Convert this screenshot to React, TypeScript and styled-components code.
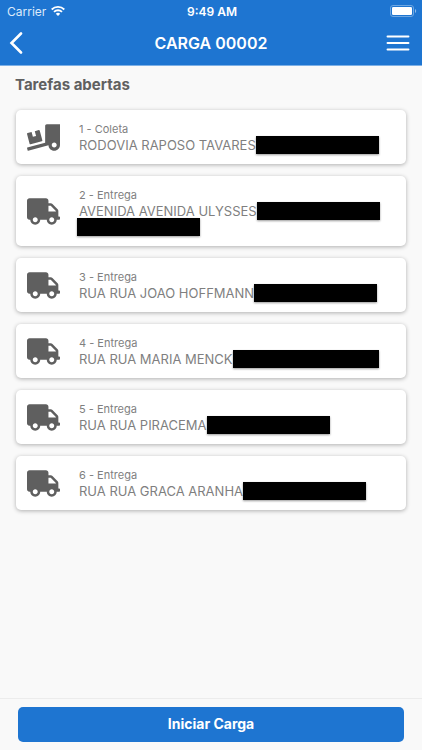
import React from "react";
import styled, { createGlobalStyle } from "styled-components";
import { FaTruck, FaTruckLoading } from "react-icons/fa";

const GlobalStyle = createGlobalStyle`
  *, *::before, *::after { box-sizing: border-box; }
  body {
    margin: 0;
    background: #f9f9f9;
    color: #7f7f7f;
    font-family: Inter, "Liberation Sans", sans-serif;
  }
  button { font: inherit; }
`;

const Screen = styled.div`
  display: flex;
  flex-direction: column;
  min-height: 100vh;
`;

const Top = styled.header`
  background: #1e75d1;
  border-bottom: 1px solid #7db0e6;
  color: #fff;
`;

const StatusBar = styled.div`
  display: grid;
  grid-template-columns: 1fr auto 1fr;
  align-items: center;
  height: 22px;
  padding: 0 5px 0 7px;
  font-size: 12px;
`;

const Carrier = styled.div`
  display: flex;
  align-items: center;
  gap: 5px;
  color: #dceafa;
`;

const Clock = styled.time`
  font-weight: 600;
`;

const BatterySlot = styled.div`
  display: flex;
  justify-content: flex-end;
`;

const NavBar = styled.div`
  display: grid;
  grid-template-columns: 44px 1fr 44px;
  align-items: center;
  height: 43px;
`;

const Title = styled.h1`
  margin: 0;
  padding-bottom: 2px;
  text-align: center;
  font-size: 16px;
  line-height: 20px;
  font-weight: 600;
`;

const NavButton = styled.button<{ $end?: boolean }>`
  display: flex;
  align-items: center;
  justify-content: ${(p) => (p.$end ? "flex-end" : "flex-start")};
  height: 43px;
  padding: 0 12px 2px 8px;
  border: 0;
  background: none;
  color: inherit;
  cursor: pointer;
`;

const Content = styled.main`
  flex: 1;
  padding: 9px 16px;
`;

const Heading = styled.h2`
  margin: 0 0 15px -1px;
  font-size: 15px;
  line-height: 20px;
  font-weight: 700;
  color: #606060;
`;

const TaskList = styled.ul`
  display: flex;
  flex-direction: column;
  gap: 12px;
  margin: 0;
  padding: 0;
  list-style: none;
`;

const Card = styled.li`
  display: flex;
  align-items: center;
  gap: 18px;
  padding: 11px;
  border-radius: 5px;
  background: #fff;
  box-shadow: 0 1px 4px rgba(0, 0, 0, 0.3);
`;

const IconBox = styled.span`
  display: flex;
  flex: none;
  width: 34px;
  color: #5f5f5f;

  svg {
    width: 33px;
    height: 27px;
  }
`;

const Details = styled.div`
  flex: 1;
  min-width: 0;
`;

const Kind = styled.div`
  font-size: 11px;
  line-height: 16px;
`;

const Address = styled.div`
  display: flex;
  flex-wrap: wrap;
  font-size: 13px;
  line-height: 16px;
  white-space: nowrap;
`;

const Redaction = styled.span<{ $size: "regular" | "wide"; $ownLine?: boolean }>`
  width: ${(p) => (p.$size === "wide" ? 146 : 123)}px;
  height: 18px;
  margin: -1px 0 -1px ${(p) => (p.$ownLine ? -2 : 0)}px;
  background: #000;
  box-shadow: 0 1px 2px rgba(0, 0, 0, 0.4);
`;

const Footer = styled.footer`
  padding: 8px 18px;
  border-top: 1px solid #ececec;
`;

const StartButton = styled.button`
  display: block;
  width: 100%;
  height: 35px;
  padding: 0 0 2px;
  border: 0;
  border-radius: 5px;
  background: #1e75d1;
  color: #fff;
  font-size: 14px;
  font-weight: 700;
  cursor: pointer;
`;

type Task = {
  kind: "Coleta" | "Entrega";
  street: string;
  hidden: "regular" | "wide";
  secondLine?: boolean;
};

const tasks: Task[] = [
  { kind: "Coleta", street: "RODOVIA RAPOSO TAVARES", hidden: "regular" },
  { kind: "Entrega", street: "AVENIDA AVENIDA ULYSSES", hidden: "regular", secondLine: true },
  { kind: "Entrega", street: "RUA RUA JOAO HOFFMANN", hidden: "regular" },
  { kind: "Entrega", street: "RUA RUA MARIA MENCK", hidden: "wide" },
  { kind: "Entrega", street: "RUA RUA PIRACEMA", hidden: "regular" },
  { kind: "Entrega", street: "RUA RUA GRACA ARANHA", hidden: "regular" },
];

const WifiIcon = () => (
  <svg width="14" height="10" viewBox="0 0 14 10" fill="none" stroke="#fff" strokeWidth="1.8" aria-hidden="true">
    <path d="M0.7 3.5a9 9 0 0 1 12.6 0" />
    <path d="M3 5.9a5.7 5.7 0 0 1 8 0" />
    <path d="M7 10 4.8 7.8a3.1 3.1 0 0 1 4.4 0Z" fill="#fff" stroke="none" />
  </svg>
);

const BatteryIcon = () => (
  <svg width="27" height="12" viewBox="0 0 27 12" aria-hidden="true">
    <rect x="0.5" y="0.5" width="23" height="11" rx="2.5" fill="none" stroke="#6ea7e2" />
    <rect x="2" y="2" width="20" height="8" rx="1.2" fill="#fff" />
    <path d="M25 4v4c1.6-.6 1.6-3.4 0-4Z" fill="#8ebbe9" />
  </svg>
);

const BackIcon = () => (
  <svg width="16" height="22" viewBox="0 0 16 22" fill="none" stroke="#fff" strokeWidth="2.6" aria-hidden="true">
    <path d="M13 1.5 3.5 11 13 20.5" strokeLinecap="round" />
  </svg>
);

const MenuIcon = () => (
  <svg width="24" height="16" viewBox="0 0 24 16" stroke="#fff" strokeWidth="1.9" strokeLinecap="round" aria-hidden="true">
    <path d="M1.5 1.5h21M1.5 8h21M1.5 14.5h21" />
  </svg>
);

export default function App() {
  return (
    <Screen>
      <GlobalStyle />
      <Top>
        <StatusBar>
          <Carrier>
            Carrier
            <WifiIcon />
          </Carrier>
          <Clock>9:49 AM</Clock>
          <BatterySlot>
            <BatteryIcon />
          </BatterySlot>
        </StatusBar>
        <NavBar>
          <NavButton type="button" aria-label="Voltar">
            <BackIcon />
          </NavButton>
          <Title>CARGA 00002</Title>
          <NavButton type="button" aria-label="Menu" $end>
            <MenuIcon />
          </NavButton>
        </NavBar>
      </Top>
      <Content>
        <Heading>Tarefas abertas</Heading>
        <TaskList>
          {tasks.map((task, index) => (
            <Card key={task.street}>
              <IconBox>{task.kind === "Coleta" ? <FaTruckLoading /> : <FaTruck />}</IconBox>
              <Details>
                <Kind>
                  {index + 1} - {task.kind}
                </Kind>
                <Address>
                  {task.street}
                  <Redaction $size={task.hidden} />
                  {task.secondLine && <Redaction $size="regular" $ownLine />}
                </Address>
              </Details>
            </Card>
          ))}
        </TaskList>
      </Content>
      <Footer>
        <StartButton type="button">Iniciar Carga</StartButton>
      </Footer>
    </Screen>
  );
}
